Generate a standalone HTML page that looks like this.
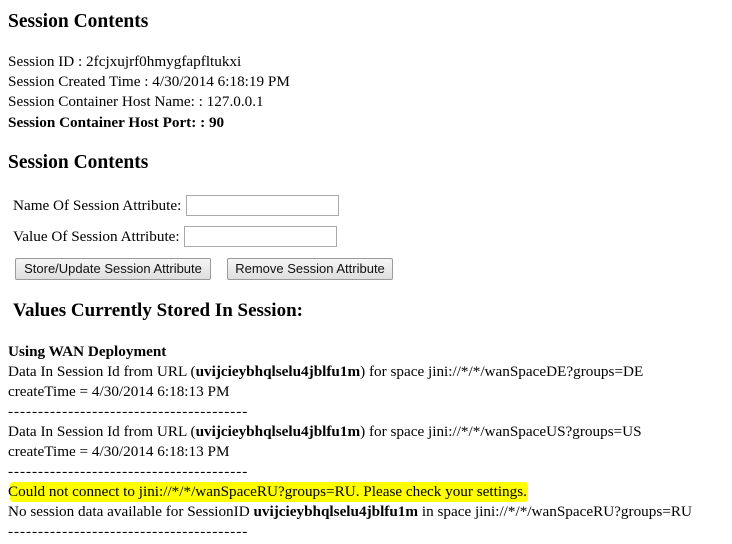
<!DOCTYPE html>
<html><head><meta charset="utf-8"><style>
body{margin:0;width:732px;height:544px;background:#fff;font-family:"Liberation Serif",serif;color:#000;position:relative;overflow:hidden}
.l{position:absolute;left:8px;font-size:15.2px;line-height:20px;white-space:nowrap}
.d{letter-spacing:0.95px}
.h{position:absolute;left:8px;font-weight:bold;font-size:19.5px;line-height:22px;white-space:nowrap}
input{position:absolute;height:21px;box-sizing:border-box;border:1px solid #a9a9a9;margin:0;padding:0}
.btn{position:absolute;height:22px;box-sizing:border-box;border:1px solid #9a9a9a;border-radius:2px;background:linear-gradient(#f6f6f6,#dedede);font-family:"Liberation Sans",sans-serif;font-size:13px;line-height:20px;text-align:center;color:#111}
.hl{position:absolute;left:10px;top:482px;width:518px;height:20px;background:#ffff00;border-radius:3px}
</style></head><body>
<div class="h" style="top:11px">Session Contents</div>
<div class="l" style="top:52px">Session ID : 2fcjxujrf0hmygfapfltukxi</div>
<div class="l" style="top:72px">Session Created Time : 4/30/2014 6:18:19 PM</div>
<div class="l" style="top:92px">Session Container Host Name: : 127.0.0.1</div>
<div class="l" style="top:113px;font-weight:bold">Session Container Host Port: : 90</div>
<div class="h" style="top:152px">Session Contents</div>
<div class="l" style="top:196px;left:13px">Name Of Session Attribute:</div>
<input style="left:186px;top:195px;width:153px">
<div class="l" style="top:227px;left:13px">Value Of Session Attribute:</div>
<input style="left:184px;top:226px;width:153px">
<div class="btn" style="left:15px;top:258px;width:196px">Store/Update Session Attribute</div>
<div class="btn" style="left:227px;top:258px;width:166px">Remove Session Attribute</div>
<div class="h" style="top:300px;left:13px;font-size:19px">Values Currently Stored In Session:</div>
<div class="l" style="top:342px;font-weight:bold">Using WAN Deployment</div>
<div class="l" style="top:362px">Data In Session Id from URL (<b>uvijcieybhqlselu4jblfu1m</b>) for space jini://*/*/wanSpaceDE?groups=DE</div>
<div class="l" style="top:382px">createTime = 4/30/2014 6:18:13 PM</div>
<div class="l d" style="top:402px">----------------------------------------</div>
<div class="l" style="top:422px">Data In Session Id from URL (<b>uvijcieybhqlselu4jblfu1m</b>) for space jini://*/*/wanSpaceUS?groups=US</div>
<div class="l" style="top:442px">createTime = 4/30/2014 6:18:13 PM</div>
<div class="l d" style="top:462px">----------------------------------------</div>
<div class="hl"></div>
<div class="l" style="top:482px">Could not connect to jini://*/*/wanSpaceRU?groups=RU. Please check your settings.</div>
<div class="l" style="top:502px">No session data available for SessionID <b>uvijcieybhqlselu4jblfu1m</b> in space jini://*/*/wanSpaceRU?groups=RU</div>
<div class="l d" style="top:522px">----------------------------------------</div>
</body></html>
